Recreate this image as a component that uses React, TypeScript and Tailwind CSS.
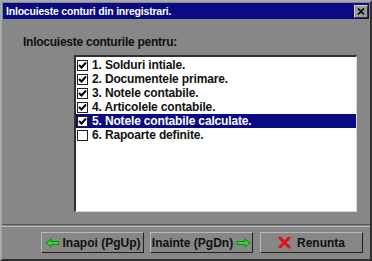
import React from "react"

const items = [
  { label: "1. Solduri intiale.", checked: true },
  { label: "2. Documentele primare.", checked: true },
  { label: "3. Notele contabile.", checked: true },
  { label: "4. Articolele contabile.", checked: true },
  { label: "5. Notele contabile calculate.", checked: true, selected: true },
  { label: "6. Rapoarte definite.", checked: false },
]

const Check = ({ checked }: { checked: boolean }) => (
  <span className="w-[11px] h-[11px] bg-white border border-[#202020] flex items-center justify-center shrink-0">
    {checked && (
      <svg width="9" height="9" viewBox="0 0 9 9">
        <path d="M1 4 L3.5 6.5 L8 1.5" stroke="#000" strokeWidth="2" fill="none" />
      </svg>
    )}
  </span>
)

const ArrowLeft = () => (
  <svg width="15" height="10" viewBox="0 0 15 10">
    <path d="M1 5 L6 1 L6 3.5 L14 3.5 L14 6.5 L6 6.5 L6 9 Z" fill="#22e022" stroke="#0a7a0a" strokeWidth="0.8" />
  </svg>
)

const ArrowRight = () => (
  <svg width="15" height="10" viewBox="0 0 15 10">
    <path d="M14 5 L9 1 L9 3.5 L1 3.5 L1 6.5 L9 6.5 L9 9 Z" fill="#22e022" stroke="#0a7a0a" strokeWidth="0.8" />
  </svg>
)

const RedX = () => (
  <svg width="13" height="13" viewBox="0 0 13 13">
    <path d="M2 2 L11 11 M11 2 L2 11" stroke="#e01010" strokeWidth="3" strokeLinecap="round" />
  </svg>
)

const Btn = ({ children, className = "" }: { children: React.ReactNode; className?: string }) => (
  <div className={`h-[21px] flex items-center justify-center gap-[3px] border-t border-l border-[#b8b8b8] border-r-[#202020] border-b-[#202020] border-r border-b text-[12px] font-bold text-[#101010] ${className}`}>
    {children}
  </div>
)

export default function App() {
  return (
    <div className="w-[372px] h-[261px] bg-[#878787] border-t-2 border-l-2 border-[#a8a8a8] border-r-2 border-b-2 border-r-[#303030] border-b-[#303030] flex flex-col font-['Liberation_Sans',Arial,sans-serif] overflow-hidden">
      <div className="mx-[1px] mt-[1px] h-[16px] bg-[#0a0a82] flex items-center justify-between pl-[3px] pr-[1px]">
        <span className="text-white font-bold text-[10.5px] tracking-[-0.2px] leading-none">Inlocuieste conturi din inregistrari.</span>
        <span className="w-[14px] h-[13px] bg-[#9a9a9a] border-t border-l border-[#d0d0d0] border-r border-b border-r-[#303030] border-b-[#303030] flex items-center justify-center">
          <svg width="8" height="7" viewBox="0 0 8 7">
            <path d="M1 0.5 L7 6.5 M7 0.5 L1 6.5" stroke="#000" strokeWidth="1.6" />
          </svg>
        </span>
      </div>

      <div className="pl-[21px] pt-[16px] h-[36px] text-[12px] font-bold tracking-[-0.25px] text-[#101010] leading-[14px]">
        Inlocuieste conturile pentru:
      </div>

      <div className="ml-[72px] w-[283px] h-[157px] bg-white border-t-2 border-l-2 border-[#303030] border-r border-b border-r-[#d8d8d8] border-b-[#d8d8d8] pt-[1px]">
        {items.map((it) => (
          <div
            key={it.label}
            className={`h-[14px] flex items-center gap-[4px] pl-[1px] text-[12px] font-bold tracking-[-0.15px] leading-none ${it.selected ? "bg-[#0a0a82] text-white" : "text-[#101010]"}`}
          >
            <Check checked={it.checked} />
            <span>{it.label}</span>
          </div>
        ))}
      </div>

      <div className="mt-[12px] border-t border-[#555555] border-b border-b-[#bcbcbc] h-[3px]" />

      <div className="flex mt-[5px] pl-[39px] gap-[6px]">
        <Btn className="w-[103px]"><ArrowLeft />Inapoi (PgUp)</Btn>
        <Btn className="w-[103px]">Inainte (PgDn)<ArrowRight /></Btn>
        <Btn className="w-[103px] ml-[1px] gap-[6px]"><RedX />Renunta</Btn>
      </div>
    </div>
  )
}
